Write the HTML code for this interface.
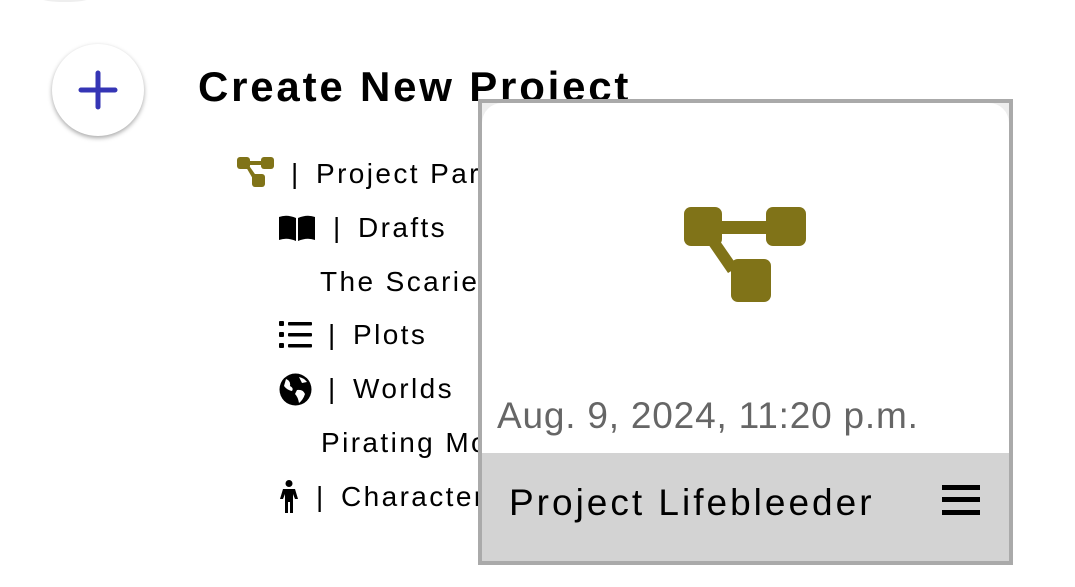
<!DOCTYPE html>
<html><head><style>
body{margin:0;width:1075px;height:587px;background:#fff;position:relative;overflow:hidden;font-family:"Liberation Sans",sans-serif;color:#000}
.a{position:absolute;white-space:nowrap}
.t{font-size:28px;line-height:28px;letter-spacing:2.4px}
.b{display:inline-block;width:25px}
</style></head><body>
<div class="a" style="left:40px;top:-6px;width:50px;height:8px;border-radius:50%;background:#eee"></div>
<div class="a" style="left:52px;top:44px;width:92px;height:92px;border-radius:50%;background:#fff;box-shadow:0 2px 5px rgba(0,0,0,.35)"></div>
<svg class="a" style="left:78px;top:70px" width="40" height="40"><path d="M20 3V37M3 20H37" stroke="#3535b5" stroke-width="5" stroke-linecap="round"/></svg>
<div class="a" style="left:198px;top:63px;font-size:42px;font-weight:bold;letter-spacing:2.8px">Create New Project</div>

<svg class="a" style="left:237px;top:157px" width="37" height="30" viewBox="0 0 37 30"><g fill="#807318"><rect x="0" y="0" width="13" height="12" rx="3"/><rect x="24" y="0" width="13" height="12" rx="3"/><rect x="15" y="17" width="13" height="13" rx="3"/><rect x="10" y="4" width="16" height="4"/><path d="M9 10L13 10L20 20L16 22Z"/></g></svg>
<div class="a t" style="left:291px;top:160px"><span class="b">|</span>Project Parent</div>

<svg class="a" style="left:278px;top:215px" width="38" height="26" viewBox="0 0 38 26"><path d="M1 2Q9 -1 18 3V26Q9 22 1 25Z M20 3Q29 -1 37 2V25Q29 22 20 26Z" fill="#000"/></svg>
<div class="a t" style="left:333px;top:214px"><span class="b">|</span>Drafts</div>
<div class="a t" style="left:320px;top:268px">The Scariest Story</div>

<svg class="a" style="left:279px;top:321px" width="33" height="27" viewBox="0 0 33 27"><g fill="#000"><rect x="0" y="0" width="5" height="5" rx="1"/><rect x="0" y="11" width="5" height="5" rx="1"/><rect x="0" y="22" width="5" height="5" rx="1"/><rect x="9" y="1" width="24" height="3.5" rx="1"/><rect x="9" y="12" width="24" height="3.5" rx="1"/><rect x="9" y="23" width="24" height="3.5" rx="1"/></g></svg>
<div class="a t" style="left:328px;top:321px"><span class="b">|</span>Plots</div>

<svg class="a" style="left:279px;top:373px" width="33" height="33" viewBox="0 0 33 33"><circle cx="16.5" cy="16.5" r="16" fill="#000"/><path d="M7 6Q12 8 11 13Q15 15 13 18Q8 17 5 13Z M18 17Q24 16 26 21Q24 27 20 30Q19 24 16 21Z M20 4Q25 5 28 9L23 10Z" fill="#fff"/></svg>
<div class="a t" style="left:328px;top:375px"><span class="b">|</span>Worlds</div>
<div class="a t" style="left:321px;top:429px">Pirating Monsters</div>

<svg class="a" style="left:280px;top:480px" width="18" height="33" viewBox="0 0 18 33"><g fill="#000"><circle cx="9" cy="3.5" r="3.5"/><path d="M3 9H15L18 19H15L13 14V33H10V22H8V33H5V14L3 19H0Z"/></g></svg>
<div class="a t" style="left:316px;top:483px"><span class="b">|</span>Characters</div>

<div class="a" style="left:478px;top:99px;width:527px;height:458px;border:4px solid #aaa;background:#fff">
  <div style="position:absolute;left:0;top:0;right:0;height:30px;background:#eee"></div>
  <div style="position:absolute;left:0;top:0;right:0;bottom:0;background:#fff;border-radius:20px 20px 0 0"></div>
  <svg style="position:absolute;left:202px;top:104px" width="122" height="96" viewBox="0 0 122 96"><g fill="#807318"><rect x="0" y="0" width="38" height="39" rx="7"/><rect x="82" y="0" width="40" height="39" rx="7"/><rect x="47" y="52" width="40" height="43" rx="7"/><rect x="34" y="14" width="52" height="13"/><path d="M22 34L36 34L54 60L44 66Z"/></g></svg>
  <div style="position:absolute;left:15px;top:292px;font-size:37px;color:#666;white-space:nowrap;letter-spacing:0.8px">Aug. 9, 2024, 11:20 p.m.</div>
  <div style="position:absolute;left:0;right:0;top:350px;bottom:0;background:#d3d3d3">
    <div style="position:absolute;left:27px;top:29px;font-size:37px;white-space:nowrap;letter-spacing:3px">Project Lifebleeder</div>
    <div style="position:absolute;left:460px;top:32px;width:38px;height:5px;background:#000"></div>
    <div style="position:absolute;left:460px;top:44px;width:38px;height:5px;background:#000"></div>
    <div style="position:absolute;left:460px;top:57px;width:38px;height:5px;background:#000"></div>
  </div>
</div>
</body></html>
